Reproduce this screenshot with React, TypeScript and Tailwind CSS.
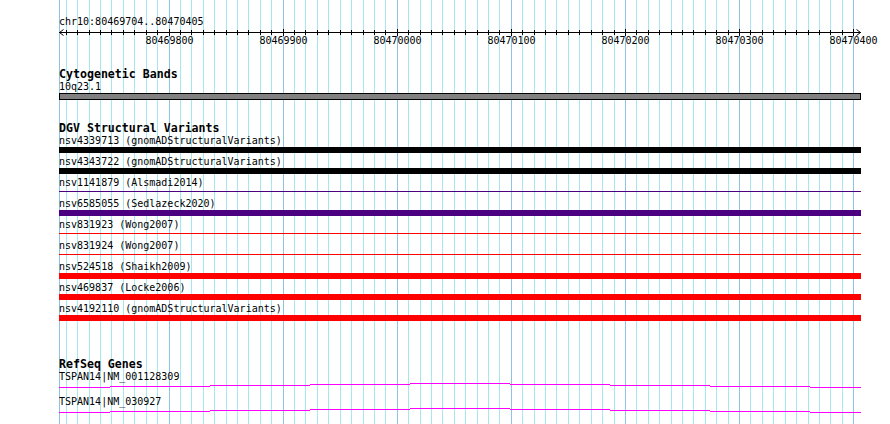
import React from 'react';

// view: chr10:80469704..80470405 drawn from x=59 to x=861
const START = 80469704;
const SCALE = 801 / 702;
const LEFT = 59;
const TRACK_W = 802;

const toX = (pos: number) => Math.round(LEFT + (pos - START) * SCALE);

const ticks: number[] = [];
for (let p = 80469710; p <= 80470400; p += 10) ticks.push(p);
const majors = ticks.filter((p) => p % 100 === 0);

const variants = [
  { label: 'nsv4339713 (gnomADStructuralVariants)', color: 'bg-black', thin: false },
  { label: 'nsv4343722 (gnomADStructuralVariants)', color: 'bg-black', thin: false },
  { label: 'nsv1141879 (Alsmadi2014)', color: 'bg-[#4b0082]', thin: true },
  { label: 'nsv6585055 (Sedlazeck2020)', color: 'bg-[#4b0082]', thin: false },
  { label: 'nsv831923 (Wong2007)', color: 'bg-[#ff0000]', thin: true },
  { label: 'nsv831924 (Wong2007)', color: 'bg-[#ff0000]', thin: true },
  { label: 'nsv524518 (Shaikh2009)', color: 'bg-[#ff0000]', thin: false },
  { label: 'nsv469837 (Locke2006)', color: 'bg-[#ff0000]', thin: false },
  { label: 'nsv4192110 (gnomADStructuralVariants)', color: 'bg-[#ff0000]', thin: false },
];

const genes = ['TSPAN14|NM_001128309', 'TSPAN14|NM_030927'];

// stepped intron "hat" as GD draws it: 1px drop every 100px away from the middle
const hatSteps = [
  [0, 51, 4],
  [51, 151, 3],
  [151, 251, 2],
  [251, 351, 1],
  [351, 451, 0],
  [451, 551, 1],
  [551, 651, 2],
  [651, 751, 3],
  [751, 802, 4],
];

const GridLines = () => (
  <svg className="absolute inset-0" width={890} height={424} shapeRendering="crispEdges">
    <rect x={LEFT} y={0} width={1} height={424} fill="#8fc3e6" />
    {ticks.map((p) => (
      <rect
        key={p}
        x={toX(p)}
        y={0}
        width={1}
        height={424}
        fill={p % 100 === 0 ? '#8fc3e6' : '#a6e6ee'}
      />
    ))}
  </svg>
);

const Ruler = () => (
  <svg width={890} height={18} className="block -ml-[59px]" shapeRendering="crispEdges">
    <rect x={LEFT} y={4} width={TRACK_W} height={1} fill="#000" />
    {ticks.map((p) => (
      <rect
        key={p}
        x={toX(p)}
        y={p % 100 === 0 ? 1 : 2}
        width={1}
        height={p % 100 === 0 ? 7 : 5}
        fill="#000"
      />
    ))}
    <line x1={59.5} y1={4.5} x2={63.5} y2={1.5} stroke="#000" strokeWidth={1} shapeRendering="auto" />
    <line x1={59.5} y1={4.5} x2={63.5} y2={7.5} stroke="#000" strokeWidth={1} shapeRendering="auto" />
    <line x1={860.5} y1={4.5} x2={856.5} y2={1.5} stroke="#000" strokeWidth={1} shapeRendering="auto" />
    <line x1={860.5} y1={4.5} x2={856.5} y2={7.5} stroke="#000" strokeWidth={1} shapeRendering="auto" />
    {majors.map((p) => (
      <text
        key={p}
        x={toX(p) + 0.5}
        y={16}
        textAnchor="middle"
        fontFamily="'DejaVu Sans Mono', monospace"
        fontSize={10}
        fill="#000"
      >
        {p}
      </text>
    ))}
  </svg>
);

const TrackTitle = ({ children, className = '' }: { children: React.ReactNode; className?: string }) => (
  <div className={`h-[12px] leading-[13px] text-[11.6px] font-bold whitespace-nowrap ${className}`}>{children}</div>
);

const Label = ({ children }: { children: React.ReactNode }) => (
  <div className="h-[13px] leading-[13px] text-[10px] whitespace-nowrap">{children}</div>
);

export default function App() {
  return (
    <div className="relative w-[890px] h-[424px] overflow-hidden bg-white text-black font-['DejaVu_Sans_Mono',monospace]">
      <GridLines />

      <div className="relative pl-[59px] pt-[15px]">
        <Label>chr10:80469704..80470405</Label>
        <Ruler />

        {/* Cytogenetic Bands */}
        <TrackTitle className="mt-[22px]">Cytogenetic Bands</TrackTitle>
        <Label>10q23.1</Label>
        <div className="w-[802px] h-[7px] border border-black bg-[#808080]" />

        {/* DGV Structural Variants */}
        <TrackTitle className="mt-[22px]">DGV Structural Variants</TrackTitle>
        <div className="flex flex-col">
          {variants.map((v) => (
            <div key={v.label} className="h-[21px]">
              <Label>{v.label}</Label>
              {v.thin ? (
                <div className="h-[6px] pt-[2px] w-[802px]">
                  <div className={`h-px ${v.color}`} />
                </div>
              ) : (
                <div className={`h-[6px] w-[802px] ${v.color}`} />
              )}
            </div>
          ))}
        </div>

        {/* RefSeq Genes */}
        <TrackTitle className="mt-[35px]">RefSeq Genes</TrackTitle>
        <div className="flex flex-col">
          {genes.map((g) => (
            <div key={g} className="h-[25px]">
              <Label>{g}</Label>
              <svg width={TRACK_W} height={12} className="block" shapeRendering="crispEdges">
                {hatSteps.map(([x1, x2, dy]) => (
                  <rect key={x1} x={x1} y={dy} width={x2 - x1} height={1} fill="#ff00ff" />
                ))}
              </svg>
            </div>
          ))}
        </div>
      </div>
    </div>
  );
}
